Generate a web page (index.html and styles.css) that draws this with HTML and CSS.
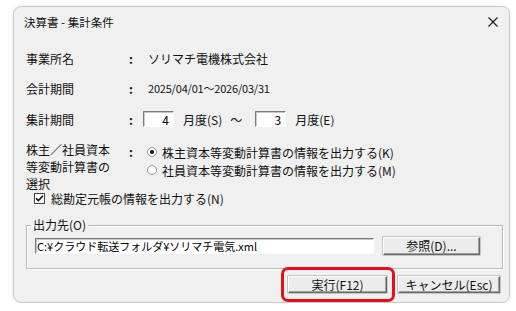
FILE: index.html
```html
<!DOCTYPE html>
<html lang="ja">
<head>
  <meta charset="UTF-8" />
  <title>決算書 - 集計条件</title>
  <link rel="stylesheet" href="styles.css">
</head>
<body>
  <div class="dialog">
    <div class="titlebar">
      <span class="title">決算書 - 集計条件</span>
      <svg class="close" width="10" height="10" viewBox="0 0 10 10">
        <path d="M0.5 0.5 L9.5 9.5 M9.5 0.5 L0.5 9.5" stroke="#1a1a1a" stroke-width="1.1" fill="none" />
      </svg>
    </div>

    <div class="content">
      <div class="row">
        <span class="lbl">事業所名</span>
        <span class="colon">:</span>
        <span class="val">ソリマチ電機株式会社</span>
      </div>
      <div class="row">
        <span class="lbl">会計期間</span>
        <span class="colon">:</span>
        <span class="val date">2025/04/01～2026/03/31</span>
      </div>
      <div class="row period">
        <span class="lbl">集計期間</span>
        <span class="colon">:</span>
        <span class="range">
          <input class="num" type="text" value="4" />
          <span class="unit">月度(S)</span>
          <span class="tilde">～</span>
          <input class="num" type="text" value="3" />
          <span class="unit">月度(E)</span>
        </span>
      </div>
      <div class="row select">
        <span class="lbl multi">株主／社員資本<br />等変動計算書の<br />選択</span>
        <span class="colon">:</span>
        <div class="radios">
          <label class="radio"><span class="dot on"></span>株主資本等変動計算書の情報を出力する(K)</label>
          <label class="radio"><span class="dot"></span>社員資本等変動計算書の情報を出力する(M)</label>
        </div>
      </div>
      <label class="check">
        <span class="box">
          <svg width="9" height="9" viewBox="0 0 9 9"><path d="M1 4.2 L3.4 6.6 L8 1.8" stroke="#111" stroke-width="1.6" fill="none" /></svg>
        </span>
        総勘定元帳の情報を出力する(N)
      </label>

      <fieldset class="group">
        <legend>出力先(O)</legend>
        <div class="outrow">
          <input class="path" type="text" value="C:¥クラウド転送フォルダ¥ソリマチ電気.xml" />
          <button class="btn browse">参照(D)...</button>
        </div>
      </fieldset>

      <div class="actions">
        <span class="mark"><button class="btn run">実行(F12)</button></span>
        <button class="btn cancel">キャンセル(Esc)</button>
      </div>
    </div>
  </div>
</body>
</html>
```

FILE: styles.css
```css
body {
  margin: 0;
  background: #fff;
  font-family: "Noto Sans CJK JP", "Noto Sans", sans-serif;
  font-size: 12px;
  color: #111;
}
.dialog {
  box-sizing: border-box;
  width: 497px;
  height: 297px;
  margin: 6px 0 0 13px;
  background: #f0f0f0;
  border: 1px solid #c9c9c9;
  border-radius: 8px;
  box-shadow: 0 0 4px rgba(0, 0, 0, 0.08);
  display: flex;
  flex-direction: column;
}
.titlebar {
  height: 30px;
  display: flex;
  align-items: center;
  justify-content: space-between;
  padding: 0 11px 0 10px;
}
.title {
  font-size: 11.5px;
}
.content {
  padding: 6px 6px 0 12px;
  display: flex;
  flex-direction: column;
}
.row {
  display: grid;
  grid-template-columns: 102px 15px 1fr;
  align-items: center;
  height: 30px;
}
.colon {
  font-weight: bold;
  padding-left: 1px;
}
.val {
  padding-left: 5px;
}
.date {
  font-size: 11px;
  letter-spacing: -0.2px;
}
.period {
  height: 32px;
}
.range {
  display: flex;
  align-items: center;
}
.num {
  box-sizing: border-box;
  width: 31px;
  height: 16px;
  padding: 0 4px 0 0;
  margin: 0;
  text-align: right;
  font: 12px "Noto Sans CJK JP", sans-serif;
  background: #fff;
  border: 1px solid;
  border-color: #7a7a7a #fff #fff #7a7a7a;
  box-shadow: inset 1px 1px 0 #c8c8c8;
}
.unit {
  margin: 0 8px 0 9px;
}
.tilde {
  margin-right: 13px;
}
.select {
  height: auto;
  align-items: start;
  margin-top: 8px;
}
.multi {
  line-height: 17px;
  margin-top: -2px;
}
.radios {
  display: flex;
  flex-direction: column;
  padding-left: 4px;
  margin-top: 0;
}
.radio {
  display: flex;
  align-items: center;
  height: 18px;
}
.dot {
  box-sizing: border-box;
  width: 10px;
  height: 10px;
  border: 1px solid #9a9a9a;
  border-radius: 50%;
  background: #fff;
  margin-right: 5px;
  display: flex;
  align-items: center;
  justify-content: center;
}
.dot.on::before {
  content: "";
  width: 4px;
  height: 4px;
  border-radius: 50%;
  background: #111;
}
.check {
  display: flex;
  align-items: center;
  height: 16px;
  margin: -2px 0 0 8px;
}
.box {
  box-sizing: border-box;
  width: 11px;
  height: 11px;
  border: 1px solid #444;
  background: #fff;
  margin-right: 6px;
  display: flex;
  align-items: center;
  justify-content: center;
}
.group {
  margin: 11px 0 0 0;
  padding: 4px 22px 13px 8px;
  border: 1px solid #b9b9b9;
  box-shadow: inset 1px 1px 0 #fff, 1px 1px 0 #fff;
}
.group legend {
  padding: 0 2px;
  margin-left: -4px;
  line-height: 16px;
}
.outrow {
  display: flex;
  align-items: center;
  gap: 9px;
}
.path {
  box-sizing: border-box;
  flex: 1;
  height: 16px;
  margin: 0;
  padding: 0 0 0 1px;
  font: 11px "Noto Sans CJK JP", sans-serif;
  background: #fff;
  border: 1px solid;
  border-color: #7a7a7a #fff #fff #7a7a7a;
  box-shadow: inset 1px 1px 0 #c8c8c8;
}
.btn {
  box-sizing: border-box;
  margin: 0;
  padding: 0;
  font: 12px "Noto Sans CJK JP", sans-serif;
  color: #111;
  background: #ececec;
  border: 1px solid;
  border-color: #fff #6a6a6a #6a6a6a #fff;
  box-shadow: inset -1px -1px 0 #a0a0a0, 0 0 0 0.5px #9a9a9a;
  line-height: 14px;
}
.browse {
  width: 97px;
  height: 18px;
}
.actions {
  display: flex;
  justify-content: flex-end;
  align-items: center;
  gap: 11px;
  padding-right: 3px;
  margin-top: 7px;
}
.run {
  width: 99px;
  height: 17px;
}
.cancel {
  width: 102px;
  height: 17px;
}
.mark {
  position: relative;
  display: flex;
}
.mark::after {
  content: "";
  position: absolute;
  top: -9px;
  bottom: -9px;
  left: -7px;
  right: -8px;
  border: 3px solid #e3101a;
  border-radius: 7px;
}
```
